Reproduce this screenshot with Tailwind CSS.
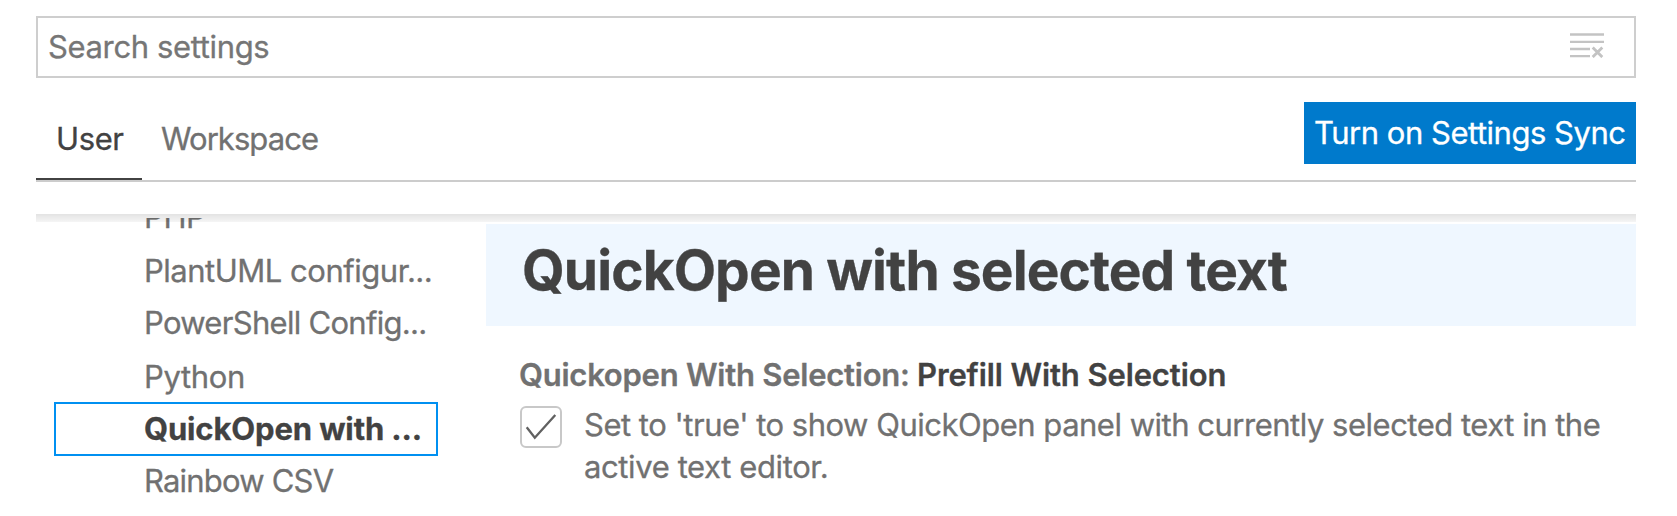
<!DOCTYPE html>
<html lang="en">
<head>
<meta charset="utf-8">
<title>Settings</title>
<script src="https://cdn.jsdelivr.net/npm/@tailwindcss/browser@4"></script>
</head>
<body class="bg-white">
<main class="flex h-[516px] w-[1677px] flex-col overflow-hidden bg-white pt-4 pr-[41px] pl-9 font-['Inter',sans-serif] text-[31px] leading-[42px] whitespace-nowrap text-[#717171] [-webkit-text-stroke:0.3px_currentColor]">
  <!-- Search -->
  <div class="flex h-[62px] shrink-0 items-center justify-between border-2 border-[#cecece] pr-[30px] pl-[10px]">
    <span class="tracking-[-0.363px] text-[#767676]">Search settings</span>
    <svg class="mb-1 h-[26px] w-[34px]" viewBox="0 0 34 26" fill="none" stroke="#c3c3c3" stroke-width="2.3">
      <path d="M0 2.5h34M0 9.8h34M0 17h20M0 24.2h20"/>
      <path d="M22.7 15.5l9.6 9.6M32.3 15.5l-9.6 9.6" stroke-width="2.8"/>
    </svg>
  </div>

  <!-- Scope tabs -->
  <div class="mt-6 flex h-20 shrink-0 justify-between border-b-2 border-[#cccccc]">
    <div class="flex">
      <div class="flex h-[78px] w-[106px] items-center border-b-2 border-[#424242] pb-[3px] pl-5 tracking-[-0.4px] text-[#424242]">User</div>
      <div class="flex h-[78px] items-center pb-[5px] pl-[19px] tracking-[-0.95px]">Workspace</div>
    </div>
    <button class="flex h-[62px] w-[332px] items-center bg-[#007acc] pl-[10px] tracking-[-0.48px] text-white">Turn on Settings Sync</button>
  </div>

  <div class="relative mt-8 flex h-[302px] shrink-0 pt-1">
    <!-- Scroll shadow -->
    <div class="absolute inset-x-0 top-0 z-10 h-2 bg-linear-to-b from-black/11 to-black/4"></div>

    <!-- Table of contents -->
    <nav class="w-[450px] overflow-hidden pl-[18px]">
      <ul class="-mt-7 w-[384px]">
        <li class="flex h-[54px] items-center pl-[90px] tracking-[-0.4px]">PHP</li>
        <li class="flex h-[53px] items-center pt-[1px] pl-[90px] tracking-[-0.485px]">PlantUML configur...</li>
        <li class="flex h-[52px] items-center pl-[90px] tracking-[-0.702px]">PowerShell Config...</li>
        <li class="flex h-[53px] items-center pt-[2px] pl-[90px] tracking-[-0.347px]">Python</li>
        <li class="flex h-[54px] items-center border-2 border-[#0090f1] pl-[88px] font-bold tracking-[-0.139px] text-[#424242]">QuickOpen with ...</li>
        <li class="flex h-[50px] items-center pl-[90px] tracking-[-0.796px]">Rainbow CSV</li>
      </ul>
    </nav>

    <!-- Settings -->
    <section class="flex-1 pt-[6px]">
      <h2 class="h-[102px] bg-[#eff7ff] pt-[6px] pl-9 text-[55px] leading-[80px] font-[650] tracking-[-0.9px] text-[#424242]">QuickOpen with selected text</h2>
      <div class="pt-[28px] pl-[33px]">
        <h3 class="flex items-center font-semibold"><span class="w-[398px] tracking-[-0.242px]">Quickopen With Selection:</span><span class="tracking-[-0.114px] text-[#424242]">Prefill With Selection</span></h3>
        <div class="mt-[8px] flex gap-[22px] pl-[1px]">
          <div class="mt-[2px] flex size-[42px] shrink-0 rounded-md border-2 border-[#c8c8c8]">
            <svg class="size-[38px]" viewBox="522 408 38 38" fill="none" stroke="#616161" stroke-width="2.3"><path d="M526.7 427.3L534.8 437.8L555.3 415"/></svg>
          </div>
          <p class="tracking-[-0.491px]">Set to 'true' to show QuickOpen panel with currently selected text in the<br><span class="tracking-[-0.389px]">active text editor.</span></p>
        </div>
      </div>
    </section>
  </div>
</main>
</body>
</html>
